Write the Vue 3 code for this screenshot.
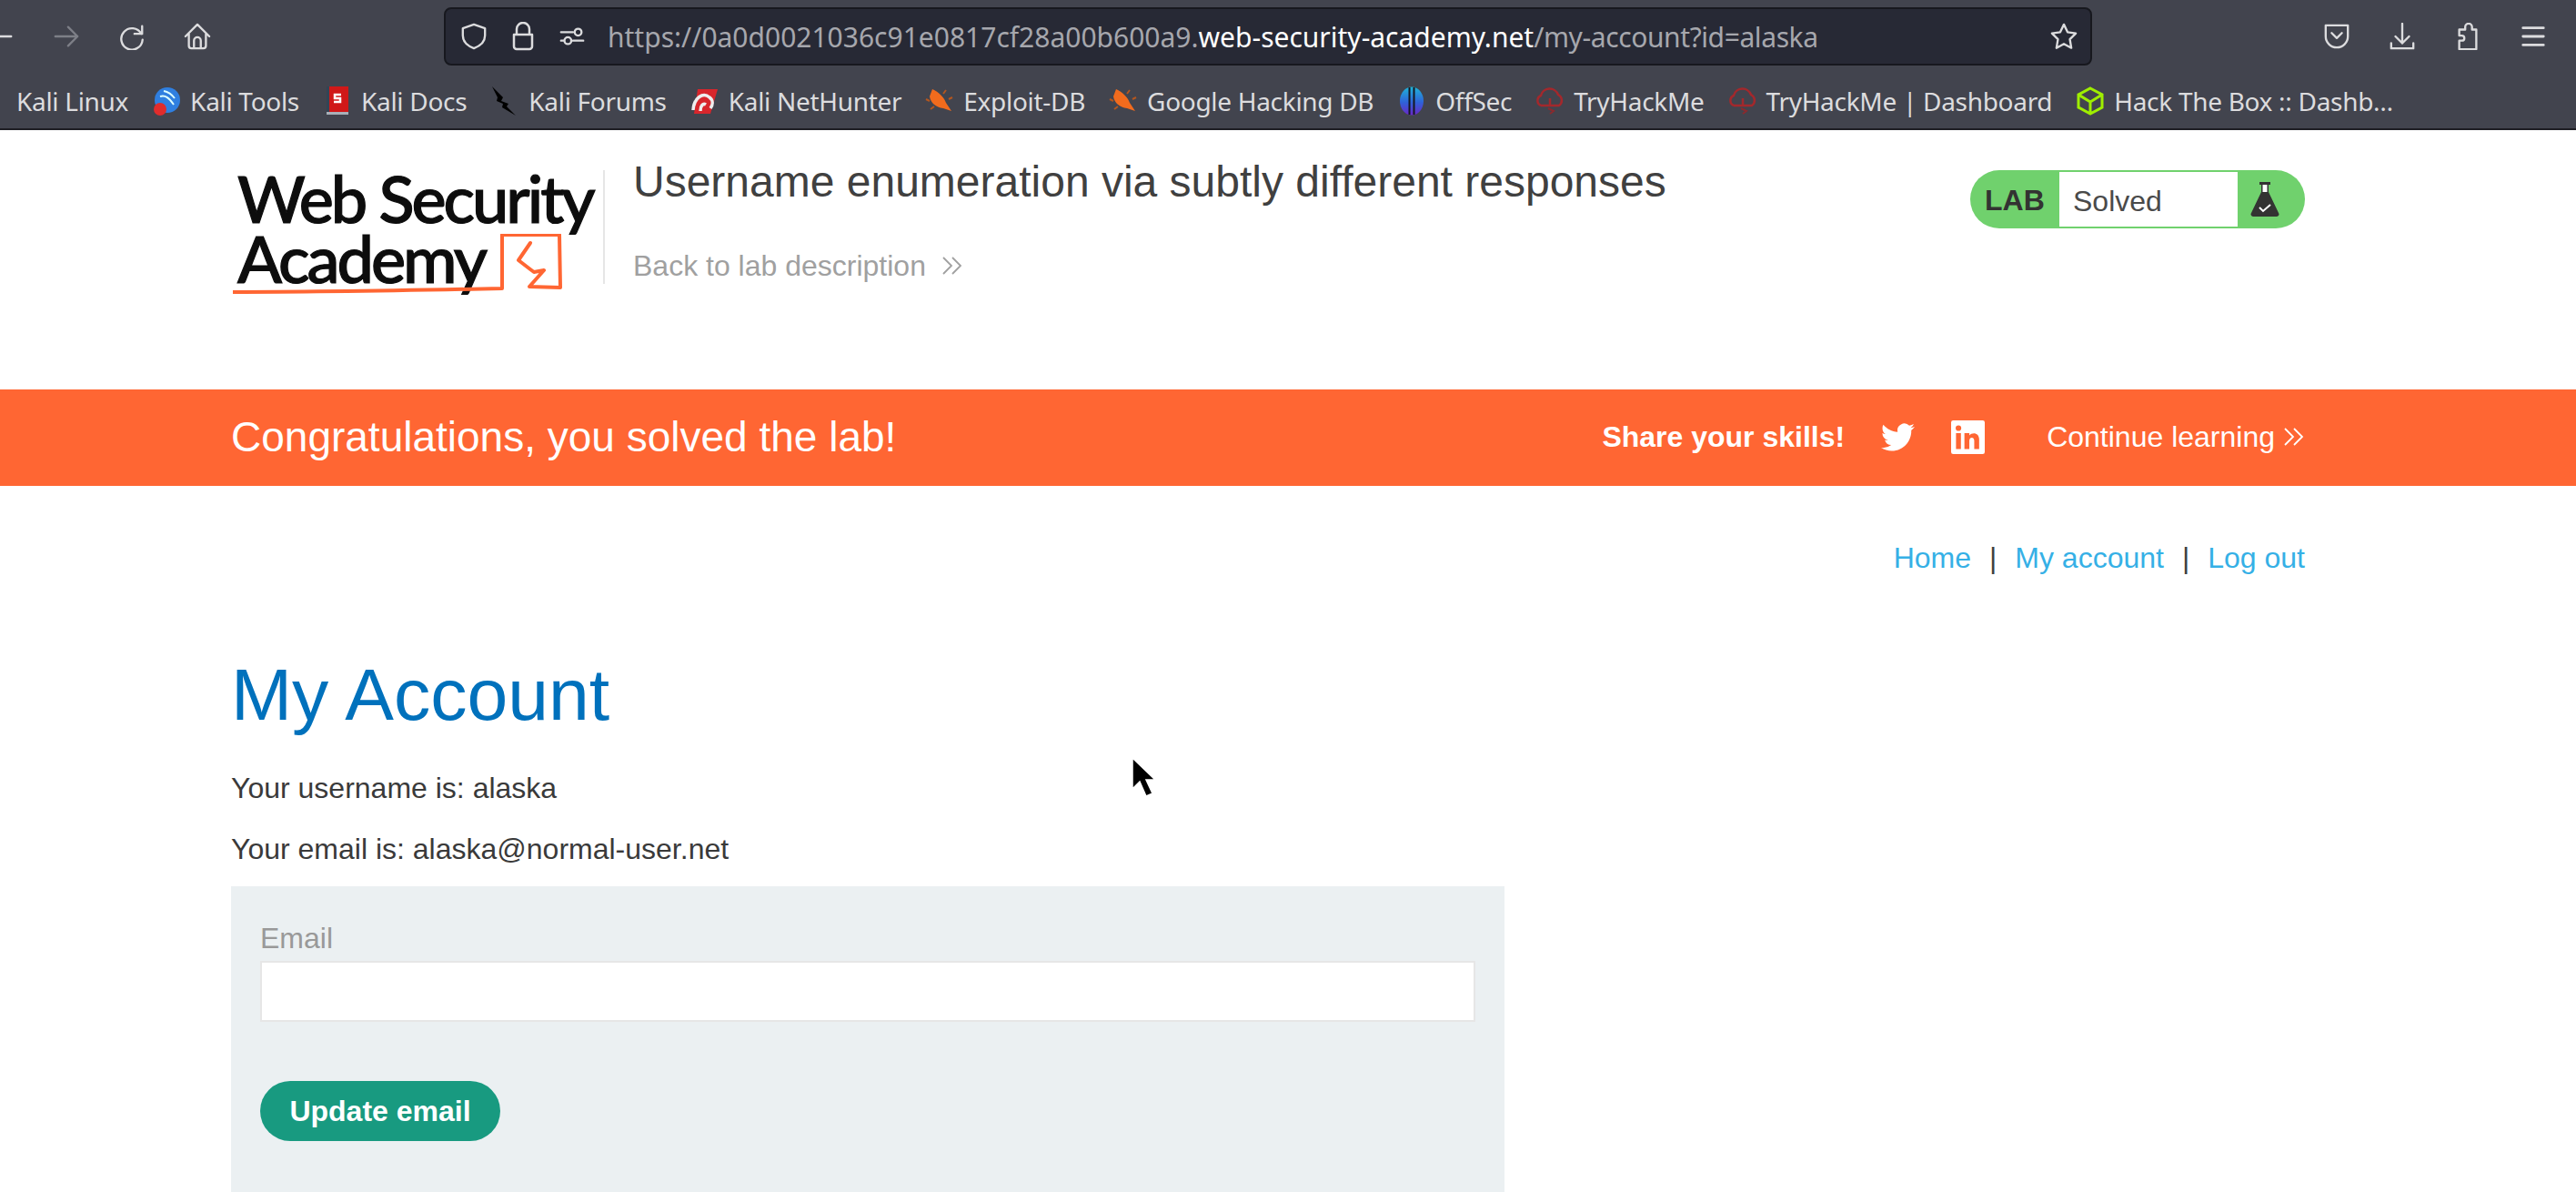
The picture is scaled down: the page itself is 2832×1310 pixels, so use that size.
<script setup>
const bookmarks = [
  { name: 'Kali Linux', icon: 'kali' },
  { name: 'Kali Tools', icon: 'tools' },
  { name: 'Kali Docs', icon: 'docs' },
  { name: 'Kali Forums', icon: 'forums' },
  { name: 'Kali NetHunter', icon: 'hunter' },
  { name: 'Exploit-DB', icon: 'bug' },
  { name: 'Google Hacking DB', icon: 'bug' },
  { name: 'OffSec', icon: 'offsec' },
  { name: 'TryHackMe', icon: 'thm' },
  { name: 'TryHackMe | Dashboard', icon: 'thm' },
  { name: 'Hack The Box :: Dashb…', icon: 'htb' }
]
</script>

<template>
  <div class="page">
    <header class="browser">
      <div class="nav-row">
        <div class="nav-buttons">
          <svg class="tb back" viewBox="0 0 32 32"><path d="M28 16H2M13 5 2 16l11 11" /></svg>
          <svg class="tb fwd" viewBox="0 0 32 32"><path d="M3 16h26M18 5l11 11-11 11" /></svg>
          <svg class="tb" viewBox="0 0 32 32"><path d="M28 4v9h-9M27 13A12.500 12.500 0 1 0 28.500 20" /></svg>
          <svg class="tb" viewBox="0 0 32 32"><path d="M2 16 16 2l14 14M6 13v14a3 3 0 0 0 3 3h14a3 3 0 0 0 3-3V13M12 30V21a4 4 0 0 1 8 0v9" /></svg>
        </div>
        <div class="urlbar">
          <svg class="ub" viewBox="0 0 32 32"><path d="M16 2 3 6.500V15c0 7 5 12 13 15 8-3 13-8 13-15V6.500Z" /></svg>
          <svg class="ub lock" viewBox="0 0 26 32"><path d="M6 14V8a7 7 0 0 1 14 0v6M3 14h20v13a3 3 0 0 1-3 3H6a3 3 0 0 1-3-3Z" /></svg>
          <svg class="ub" viewBox="0 0 32 32"><path d="M3 11h14M3 21h3M17 21h12" /><circle cx="23" cy="11" r="4" /><circle cx="11" cy="21" r="4" /></svg>
          <div class="url"><span>https://0a0d0021036c91e0817cf28a00b600a9.</span><b>web-security-academy.net</b><span class="url-path">/my-account?id=alaska</span></div>
          <svg class="ub star" viewBox="0 0 32 32"><path d="m16 2 4.300 9 9.700 1.400-7 7 1.700 10.100-8.700-4.800-8.700 4.800L9 19.400l-7-7 9.700-1.400Z" /></svg>
        </div>
        <div class="tools">
          <svg class="tb" viewBox="0 0 32 32"><path d="M3 3h26v13a13 13 0 0 1-26 0ZM10 12l6 6 6-6" /></svg>
          <svg class="tb" viewBox="0 0 32 32"><path d="M16 1v23M8 16l8 8 8-8M3 24v6h26v-6" /></svg>
          <svg class="tb" viewBox="0 0 32 32"><path d="M6 31V21h3a3 3 0 0 0 0-6H6V8h7V5a4 4 0 0 1 8 0v3h5v23Z" /></svg>
          <svg class="tb ham" viewBox="0 0 32 32"><path d="M4 6h24M4 16h24M4 26h24" /></svg>
        </div>
      </div>
      <div class="bookmarks">
        <div v-for="b in bookmarks" :key="b.name" class="bm">
          <svg class="bm-icon" viewBox="0 0 32 32">
            <path v-if="b.icon === 'kali'" d="M4 2c8 6 12 14 10 28M10 4c6 8 8 16 6 26" stroke="#000" stroke-width="3" fill="none" />
            <template v-else-if="b.icon === 'tools'">
              <circle cx="17" cy="15" r="14" fill="#2f7fe0" />
              <path d="M9 11c6-2 10 2 15 9M13 5c5 1 9 4 12 8" stroke="#dff" stroke-width="2" fill="none" />
              <circle cx="9" cy="25" r="7" fill="#e02c2c" />
            </template>
            <template v-else-if="b.icon === 'docs'">
              <rect x="4" y="0" width="24" height="31" fill="#d01818" />
              <rect x="4" y="0" width="3" height="31" fill="#345" />
              <rect x="4" y="28" width="24" height="3" fill="#a8b0b8" />
              <path d="M20 9h-7v4h6v4h-7" stroke="#fff" stroke-width="2.500" fill="none" />
            </template>
            <path v-else-if="b.icon === 'forums'" d="M2 0 14 12l-2 4 8 3-2 3 10 10-15-9 1-4-7-3 1-4Z" fill="#000" />
            <template v-else-if="b.icon === 'hunter'">
              <path d="M8 3h22L22 30H4Z" fill="#d8262c" />
              <path d="M3 26C4 12 14 6 21 12c4 3 4 8 1 12M11 27c0-6 3-9 6-7" stroke="#eee" stroke-width="3.500" fill="none" />
            </template>
            <template v-else-if="b.icon === 'bug'">
              <path d="M8 3c7 3 13 9 15 15l6 9-9-3C12 23 6 18 5 11Z" fill="#f26b1d" />
              <path d="M5 16 1 14M10 22l-4 3M20 8l3-4M26 14l4-2" stroke="#b3561f" stroke-width="2" fill="none" />
            </template>
            <template v-else-if="b.icon === 'offsec'">
              <defs>
                <linearGradient id="offsec-grad" x1="0" y1="0" x2="0" y2="1">
                  <stop offset="0" stop-color="#1fb4d8" />
                  <stop offset=".55" stop-color="#2f62d8" />
                  <stop offset="1" stop-color="#6a28c8" />
                </linearGradient>
              </defs>
              <ellipse cx="16" cy="16" rx="13" ry="15.500" fill="url(#offsec-grad)" />
              <path d="M13.500 1v30M18.500 1v30" stroke="#15171f" stroke-width="2" />
            </template>
            <template v-else-if="b.icon === 'thm'">
              <path d="M6 21a6 6 0 0 1 0-11 10 10 0 0 1 19-1 7 7 0 0 1 1 12H6M16 13v7" stroke="#a3282c" stroke-width="2.500" fill="none" />
              <path d="M14 24l6 3-4 3" stroke="#8a2a2e" stroke-width="2" fill="none" />
            </template>
            <template v-else>
              <path d="M16 2 29 9v14l-13 7-13-7V9ZM3 9l13 8 13-8M16 17v13" stroke="#9fef00" stroke-width="3" fill="none" />
            </template>
          </svg>
          <span>{{ b.name }}</span>
        </div>
      </div>
    </header>

    <section class="lab-header">
      <div class="logo">
        <div class="logo-text">Web Security<br />Academy</div>
        <svg class="logo-mark" viewBox="0 0 364 70">
          <path d="M0 64c100 0 200-2 296-4V1h63l1 58-34-1 16-18-11 2-4-3-13-10 13-19" fill="none" stroke="#ff6633" stroke-width="4" stroke-linejoin="round" stroke-linecap="round" />
        </svg>
      </div>
      <div class="lab-title">
        <h2>Username enumeration via subtly different responses</h2>
        <a class="back-link">Back to lab description
          <svg class="chev" viewBox="0 0 24 24"><path d="M2 3l9 9-9 9M12 3l9 9-9 9" /></svg>
        </a>
      </div>
      <div class="status">
        <span class="status-lab">LAB</span>
        <span class="status-text">Solved</span>
        <span class="status-flask">
          <svg viewBox="0 0 32 40" width="32" height="40">
            <path d="M10 1h12v3h-2v8l11 23a2.500 2.500 0 0 1-2 4H3a2.500 2.500 0 0 1-2-4l11-23V4h-2Z" fill="#333332" />
            <path d="M13.500 4h5v8h-5Z" fill="#fff" />
            <path d="M10 29l4 4 8-7" fill="none" stroke="#fff" stroke-width="2" />
          </svg>
        </span>
      </div>
    </section>

    <section class="banner">
      <h4>Congratulations, you solved the lab!</h4>
      <div class="share">
        <strong>Share your skills!</strong>
        <svg class="social" viewBox="0 0 24 24"><path fill="#fff" d="M23.950 4.570a10 10 0 0 1-2.820.770 4.960 4.960 0 0 0 2.160-2.720c-.95.560-2 .96-3.130 1.190a4.920 4.920 0 0 0-8.380 4.480C7.690 8.090 4.070 6.130 1.640 3.160a4.820 4.820 0 0 0-.66 2.470c0 1.710.87 3.210 2.190 4.100a4.900 4.900 0 0 1-2.230-.62v.06a4.920 4.920 0 0 0 3.950 4.830 5 5 0 0 1-2.210.08 4.940 4.940 0 0 0 4.600 3.420A9.870 9.870 0 0 1 0 19.540a13.940 13.940 0 0 0 7.550 2.210c9.050 0 14-7.500 14-13.980 0-.21 0-.42-.02-.63a9.940 9.940 0 0 0 2.460-2.550Z" /></svg>
        <svg class="social" viewBox="0 0 24 24"><path fill="#fff" d="M1.500 0h21A1.500 1.500 0 0 1 24 1.500v21a1.500 1.500 0 0 1-1.500 1.500h-21A1.500 1.500 0 0 1 0 22.500v-21A1.500 1.500 0 0 1 1.500 0ZM3.500 9v11.500H7V9Zm1.750-5.500a2 2 0 1 0 0 4 2 2 0 0 0 0-4ZM9.500 9v11.500H13v-6c0-3 3.500-3 3.500 0v6H20v-7c0-5-5-5.300-7-2.800V9Z" fill-rule="evenodd" /></svg>
        <a class="continue">Continue learning
          <svg class="chev light" viewBox="0 0 24 24"><path d="M2 3l9 9-9 9M12 3l9 9-9 9" /></svg>
        </a>
      </div>
    </section>

    <main class="content">
      <nav class="site-nav">
        <a>Home</a><i>|</i><a>My account</a><i>|</i><a>Log out</a>
      </nav>
      <h1>My Account</h1>
      <p>Your username is: alaska</p>
      <p>Your email is: alaska@normal-user.net</p>
      <form class="panel" @submit.prevent>
        <label for="email">Email</label>
        <input id="email" type="email" />
        <button type="submit">Update email</button>
      </form>
    </main>

    <svg class="cursor" viewBox="0 0 26 44"><path d="M1 1v34l8-8 7 16 7-3-7-15h10Z" fill="#000" stroke="#fff" stroke-width="1.500" /></svg>
  </div>
</template>

<style>
html, body { margin: 0; background: #fff; overflow: hidden; }
</style>

<style scoped>
.page {
  position: relative;
  width: 2832px;
  height: 1310px;
  overflow: hidden;
  font-family: "Liberation Sans", Arial, sans-serif;
  color: #3a3a3a;
  background: #fff;
}
.browser {
  height: 143px;
  box-sizing: border-box;
  background: #42444e;
  border-bottom: 2px solid #1e1e24;
  color: #dcdcde;
  font-family: "Noto Sans", sans-serif;
}
.nav-row {
  height: 80px;
  display: flex;
  align-items: center;
}
.nav-buttons {
  width: 488px;
  flex: none;
  display: flex;
  align-items: center;
  gap: 42px;
  margin-left: -14px;
  margin-right: 14px;
}
.tb, .ub {
  width: 30px;
  height: 30px;
  fill: none;
  stroke: #dcdcde;
  stroke-width: 2.500;
  stroke-linejoin: round;
  stroke-linecap: round;
  flex: none;
}
.fwd { stroke: #7d7f87; }
.urlbar {
  width: 1812px;
  height: 64px;
  flex: none;
  box-sizing: border-box;
  background: #272935;
  border: 2px solid #17181e;
  border-radius: 8px;
  display: flex;
  align-items: center;
  padding: 0 14px 0 16px;
  gap: 26px;
}
.lock { width: 26px; height: 32px; }
.url {
  flex: 1;
  margin-left: -2px;
  font-size: 30px;
  color: #a6a7ad;
  white-space: nowrap;
}
.url b { font-weight: 400; color: #fff; }
.url-path { letter-spacing: -0.4px; }
.tools {
  display: flex;
  align-items: center;
  gap: 42px;
  margin-left: 254px;
}
.ham { stroke-width: 3px; }
.bookmarks {
  height: 61px;
  display: flex;
  align-items: center;
  gap: 26px;
  margin-left: -24px;
  font-size: 28px;
  letter-spacing: -0.3px;
  white-space: nowrap;
}
.bm { display: flex; align-items: center; gap: 10px; }
.bm-icon { width: 32px; height: 32px; flex: none; }

.lab-header {
  height: 285px;
  box-sizing: border-box;
  display: flex;
  align-items: flex-start;
  padding: 44px 298px 0 258px;
}
.logo {
  position: relative;
  width: 405px;
  height: 125px;
  flex: none;
  border-right: 2px solid #e6e6e6;
  margin-right: 31px;
}
.logo-text {
  font-family: Lato, sans-serif;
  font-size: 72px;
  font-weight: 500;
  -webkit-text-stroke: 1.200px #0d0d0d;
  line-height: 66px;
  letter-spacing: -3px;
  color: #0d0d0d;
  margin: -3px 0 0 3px;
  white-space: nowrap;
}
.logo-mark {
  position: absolute;
  left: -2px;
  top: 70px;
  width: 364px;
  height: 70px;
}
.lab-title { flex: 1; }
.lab-title h2 {
  margin: -15px 0 0;
  font-size: 48px;
  line-height: 56px;
  font-weight: 400;
  color: #404040;
}
.back-link {
  display: flex;
  align-items: center;
  gap: 17px;
  margin-top: 45px;
  font-size: 32px;
  line-height: 38px;
  color: #a0a0a0;
}
.chev {
  width: 24px;
  height: 28px;
  fill: none;
  stroke: #a0a0a0;
  stroke-width: 1.800;
}
.chev.light { stroke: #fff; margin-left: 9px; }
.status {
  width: 368px;
  height: 64px;
  flex: none;
  box-sizing: border-box;
  display: flex;
  align-items: stretch;
  background: #70d16d;
  border-radius: 32px;
  padding: 2px 0;
}
.status-lab {
  width: 98px;
  padding-left: 16px;
  box-sizing: border-box;
  line-height: 62px;
  font-size: 32px;
  font-weight: 700;
  color: #333332;
}
.status-text {
  width: 196px;
  box-sizing: border-box;
  padding: 1px 0 0 15px;
  background: #fff;
  line-height: 62px;
  font-size: 32px;
  color: #4a4a4a;
}
.status-flask {
  flex: 1;
  display: flex;
  align-items: center;
  padding-left: 14px;
}

.banner {
  height: 106px;
  box-sizing: border-box;
  background: #ff6633;
  color: #fff;
  display: flex;
  align-items: center;
  justify-content: space-between;
  padding: 0 298px 2px 254px;
}
.banner h4 { margin: 0; font-size: 46px; font-weight: 400; }
.share { display: flex; align-items: center; }
.share strong { font-size: 32px; margin-right: 40px; }
.social { width: 37px; height: 37px; margin-right: 40px; }
.continue { display: flex; align-items: center; font-size: 32px; margin-left: 28px; }

.content { padding: 0 298px 0 254px; }
.site-nav {
  display: flex;
  justify-content: flex-end;
  align-items: center;
  gap: 20px;
  height: 40px;
  padding-top: 59px;
  font-size: 32px;
  color: #35b0e6;
}
.site-nav i { font-style: normal; color: #404040; }
h1 {
  margin: 84px 0 0;
  font-size: 80.500px;
  line-height: 92px;
  font-weight: 400;
  color: #0071bc;
}
p { margin: 0; font-size: 32px; line-height: 37px; }
h1 + p { margin-top: 39px; }
p + p { margin-top: 30px; }
.panel {
  width: 1400px;
  height: 400px;
  box-sizing: border-box;
  margin-top: 22px;
  padding: 35px 32px;
  background: #ebf0f2;
  display: flex;
  flex-direction: column;
  align-items: flex-start;
}
label { font-size: 32px; line-height: 44px; color: #999; }
input {
  width: 1336px;
  height: 67px;
  box-sizing: border-box;
  margin-top: 3px;
  background: #fff;
  border: 2px solid #e6e6e6;
  outline: 0;
}
button {
  margin-top: 65px;
  width: 264px;
  height: 66px;
  border: 0;
  border-radius: 33px;
  background: #189a80;
  color: #fff;
  font: 700 32px "Liberation Sans", Arial, sans-serif;
}
.cursor { position: absolute; left: 1244px; top: 832px; width: 26px; height: 44px; }
</style>
